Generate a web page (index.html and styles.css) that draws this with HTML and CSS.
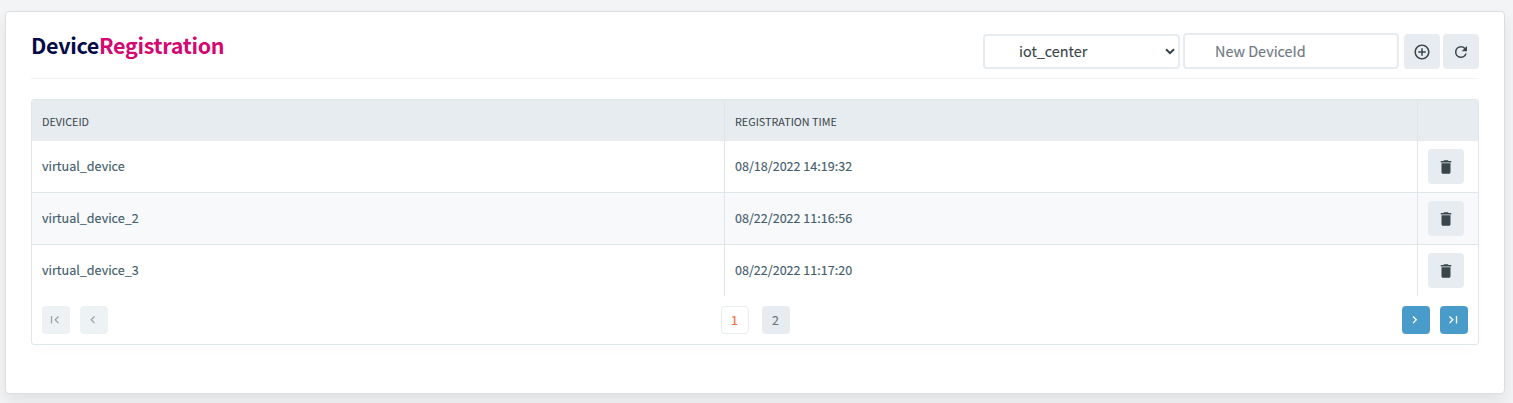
FILE: index.html
```html
<!DOCTYPE html>
<html lang="en">
<head>
<meta charset="utf-8">
<title>Device Registration</title>
<link rel="stylesheet" href="styles.css">
</head>
<body>
<svg class="defs" width="0" height="0">
  <symbol id="trash" viewBox="0 0 24 24"><path d="M6 19c0 1.1.9 2 2 2h8c1.1 0 2-.9 2-2V7H6v12zM19 4h-3.5l-1-1h-5l-1 1H5v2h14V4z"/></symbol>
</svg>
<main class="card">
  <header class="head">
    <h1 class="title">Device<span class="accent">Registration</span></h1>
    <div class="tools">
      <div class="select"><span class="label">iot_center</span>
        <svg class="caret" width="10" height="7" viewBox="0 0 10 7"><path d="M1 1.2 5 5.2 9 1.2"/></svg>
      </div>
      <input class="field" type="text" placeholder="New DeviceId">
      <button class="btn add"><svg class="icon" width="18" height="18" viewBox="0 0 24 24"><path d="M13 7h-2v4H7v2h4v4h2v-4h4v-2h-4V7zm-1-5C6.480 2 2 6.480 2 12s4.480 10 10 10 10-4.480 10-10S17.520 2 12 2zm0 18c-4.410 0-8-3.590-8-8s3.590-8 8-8 8 3.590 8 8-3.590 8-8 8z"/></svg></button>
      <button class="btn"><svg class="icon" width="18" height="18" viewBox="0 0 24 24"><path d="M17.650 6.350A7.958 7.958 0 0 0 12 4a8 8 0 1 0 7.730 10h-2.080A6 6 0 1 1 12 6c1.660 0 3.140.690 4.220 1.780L13 11h7V4l-2.350 2.350z"/></svg></button>
    </div>
  </header>
  <section class="grid">
    <div class="row labels"><div class="cell">DEVICEID</div><div class="cell">REGISTRATION TIME</div><div class="cell"></div></div>
    <div class="row"><div class="cell">virtual_device</div><div class="cell">08/18/2022 14:19:32</div><div class="cell"><button class="btn"><svg class="icon bin" width="18" height="18"><use href="#trash"/></svg></button></div></div>
    <div class="row even"><div class="cell">virtual_device_2</div><div class="cell">08/22/2022 11:16:56</div><div class="cell"><button class="btn"><svg class="icon bin" width="18" height="18"><use href="#trash"/></svg></button></div></div>
    <div class="row last"><div class="cell">virtual_device_3</div><div class="cell">08/22/2022 11:17:20</div><div class="cell"><button class="btn"><svg class="icon bin" width="18" height="18"><use href="#trash"/></svg></button></div></div>
    <nav class="pager">
      <div class="steps">
        <button class="page off"><svg class="arrow" width="10" height="10" viewBox="0 0 10 10"><path d="M1.500 1v7.500M8.500 1.500 5.200 4.800l3.300 3.300"/></svg></button>
        <button class="page off"><svg class="arrow" width="10" height="10" viewBox="0 0 10 10"><path d="M6.500 1.500 3.200 4.800l3.300 3.300"/></svg></button>
      </div>
      <div class="pages"><button class="page current">1</button><button class="page">2</button></div>
      <div class="steps">
        <button class="page on"><svg class="arrow" width="10" height="10" viewBox="0 0 10 10"><path d="M3 1.500l3.300 3.300L3 8.100"/></svg></button>
        <button class="page on"><svg class="arrow" width="10" height="10" viewBox="0 0 10 10"><path d="M1.500 1.500l3.300 3.300L1.500 8.100M8.500 1v7.500"/></svg></button>
      </div>
    </nav>
  </section>
</main>
</body>
</html>
```
FILE: styles.css
```css
* { box-sizing: border-box; }
body {
  margin: 0;
  height: 403px;
  overflow: hidden;
  padding: 11px 8px 9px 5px;
  background: #f3f4f6;
  font-family: "Noto Sans CJK SC", "Noto Sans", sans-serif;
}
.defs { display: block; }
.card {
  height: 383px;
  padding: 20px 25px;
  border: 1px solid #dcdddf;
  border-radius: 4px;
  background: #fff;
  box-shadow: 0 8px 16px rgba(0, 0, 0, .075);
}
.head {
  display: flex;
  justify-content: space-between;
  height: 47px;
  border-bottom: 1px solid #f2f3f4;
}
.title {
  margin: 0;
  font-size: 21.5px;
  line-height: 26px;
  letter-spacing: -.31px;
  font-weight: 700;
  color: #020a47;
}
.accent { color: #d30971; }
.tools { display: flex; align-items: flex-start; padding-top: 1px; }
.select, .field {
  border: 2px solid #e7ecf0;
  border-radius: 4px;
  background: #fff;
  font-size: 14.4px;
  -webkit-text-stroke: .15px currentColor;
}
.select {
  display: flex;
  align-items: center;
  justify-content: space-between;
  width: 197px;
  height: 35px;
  margin: 1px 3px 0 0;
  padding: 0 3px 0 34px;
  color: #3a464d;
}
.label { line-height: 20px; padding-bottom: 2px; }
.caret { fill: none; stroke: #35424a; stroke-width: 2; }
.field {
  width: 216px;
  height: 36px;
  margin: 0 5px 0 0;
  padding: 0 0 2px 30px;
  font-family: inherit;
}
.field::placeholder { color: #6f7982; opacity: 1; }
.btn {
  display: flex;
  align-items: center;
  justify-content: center;
  width: 36px;
  height: 35px;
  margin: 1px 0 0;
  padding: 0;
  border: 0;
  border-radius: 4px;
  background: #e7ecf0;
}
.add { margin-right: 3px; }
.icon { fill: #39464c; }
.grid {
  height: 246px;
  margin-top: 20px;
  border: 1px solid #dee6ea;
  border-radius: 3px;
  box-shadow: 0 8px 12px rgba(0, 0, 0, .012);
}
.row { display: grid; grid-template-columns: 693px 693px 60px; height: 52px; }
.even { background: #f8f9fb; }
.cell {
  display: flex;
  align-items: center;
  padding: 0 0 2px 10px;
  border-right: 1px solid #dee6ea;
  border-bottom: 1px solid #dee6ea;
  font-size: 12.55px;
  line-height: 18px;
  color: #435d6b;
  -webkit-text-stroke: .15px currentColor;
}
.cell:last-child { border-right: 0; padding-bottom: 0; }
.last { height: 51px; }
.last .cell { border-bottom: 0; }
.cell .btn { margin: 0; }
.labels { height: 41px; background: #e7ecf0; }
.labels .cell {
  border-bottom: 0;
  padding-top: 2px;
  font-size: 10.8px;
  color: #38454a;
  -webkit-text-stroke: 0;
}
.pager {
  display: flex;
  justify-content: space-between;
  padding: 10px 10px 0;
}
.steps { display: flex; gap: 10px; }
.pages { display: flex; gap: 13px; }
.page {
  display: flex;
  align-items: center;
  justify-content: center;
  width: 28px;
  height: 28px;
  padding: 0;
  border: 0;
  border-radius: 4px;
  background: #e7ecf0;
  color: #69767b;
  font: 12.5px/18px "Noto Sans CJK SC", sans-serif;
  -webkit-text-stroke: .15px currentColor;
}
.current { border: 1px solid #e7ecf0; background: #fff; color: #ff6a39; }
.off { background: #edf2f5; color: #9ca4a8; }
.on { background: #499cc9; color: #fff; }
.arrow { margin: 0 2px 0 0; fill: none; stroke: currentColor; stroke-width: 1.3; }
```
